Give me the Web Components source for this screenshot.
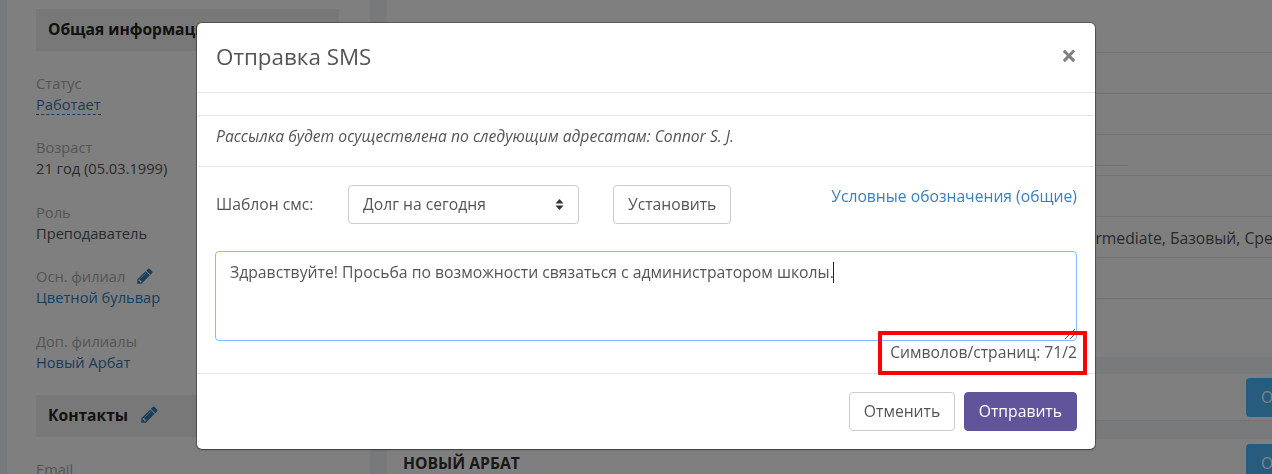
<!DOCTYPE html>
<html lang="ru"><head><meta charset="utf-8"><title>SMS</title>
<style>
html,body{margin:0;padding:0;height:474px;overflow:hidden;background:#eef2f5;font:14.67px/20px "Open Sans",sans-serif;color:#333}
</style></head><body>

<app-shell>
  <side-panel slot="side">
    <side-heading>Общая информация</side-heading>
    <info-field label="Статус"><a-dash>Работает</a-dash></info-field>
    <info-field label="Возраст">21 год (05.03.1999)</info-field>
    <info-field label="Роль">Преподаватель</info-field>
    <info-field label="Осн. филиал" edit link>Цветной бульвар</info-field>
    <info-field label="Доп. филиалы" link>Новый Арбат</info-field>
    <side-heading edit>Контакты</side-heading>
    <info-field label="Email"></info-field>
  </side-panel>
  <main-panel slot="main"></main-panel>
</app-shell>

<sms-modal></sms-modal>

<script>
const PENCIL = s => `<svg width="${s}" height="${s}" viewBox="0 0 1792 1792" style="display:block"><path fill="currentColor" d="M491 1536l91-91-235-235-91 91v107h128v128h107zm523-928q0-22-22-22-10 0-17 7l-542 542q-7 7-7 17 0 22 22 22 10 0 17-7l542-542q7-7 7-17zm-54-192l416 416-832 832h-416v-416zm683 96q0 53-37 90l-166 166-416-416 166-165q36-38 90-38 53 0 91 38l235 234q37 39 37 91z"/></svg>`;
function def(name, html, init){
  customElements.define(name, class extends HTMLElement{
    constructor(){super();this.attachShadow({mode:'open'}).innerHTML = html;}
    connectedCallback(){ if(init) init(this); }
  });
}
def('app-shell',`<style>
:host{display:flex;height:474px;overflow:hidden;padding-left:7px;box-sizing:border-box}
.side{width:363px;background:#fff;flex:none}
.gap{width:17px;flex:none}
.main{flex:1;background:#fff;min-width:0}
</style><div class="side"><slot name="side"></slot></div><div class="gap"></div><div class="main"><slot name="main"></slot></div>`);

def('side-panel',`<style>:host{display:block;padding:9px 31px 0 29px}</style><slot></slot>`);

def('side-heading',`<style>
:host{display:flex;align-items:center;gap:12px;height:42px;box-sizing:border-box;padding:0 0 2px 12px;background:#f0f0f0;font-weight:700;font-size:15.6px;color:#222;margin-bottom:22px;white-space:nowrap;overflow:hidden}
.i{color:#337ab7;display:block}
</style><slot></slot><span class="i"></span>`, el=>{ if(el.hasAttribute('edit')) el.shadowRoot.querySelector('.i').innerHTML=PENCIL(19); });

def('info-field',`<style>
:host{display:block;margin-bottom:23.4px;color:#555;white-space:nowrap}
.l{color:#aaa;display:flex;align-items:center;gap:11px;height:20px}
.i{color:#337ab7;display:block}
.v{margin-top:1px;height:20px}
:host([link]) .v{color:#337ab7}
</style><div class="l"><span class="t"></span><span class="i"></span></div><div class="v"><slot></slot></div>`, el=>{
  el.shadowRoot.querySelector('.t').textContent=el.getAttribute('label');
  if(el.hasAttribute('edit')) el.shadowRoot.querySelector('.i').innerHTML=PENCIL(18);
});

def('a-dash',`<style>:host{display:inline-block;color:#337ab7;border-bottom:1px dashed #337ab7;line-height:20px;padding-top:0;vertical-align:top}</style><slot></slot>`);

def('main-panel',`<style>
:host{display:block;overflow:hidden;white-space:nowrap;font-size:15.7px}
.r{height:40px;border-bottom:1px solid #e7e7e7;position:relative;box-sizing:content-box}
.r.first{height:52px}
.short{height:30px;border-bottom:1px solid #e7e7e7;width:741px}
.txt{padding-left:680px;line-height:42px;color:#555}
.blank{height:58px}
.band{height:17px;background:#f0f4f6}
.sec{height:46px;border-bottom:1px solid #e7e7e7;display:flex;justify-content:flex-end}
.band2{height:18px;background:#f0f4f6}
.b{width:60px;height:39px;background:#4fb9ff;border-radius:4px;margin:4px -34px 0 0;color:#fff;padding:9px 0 0 15px;box-sizing:border-box;flex:none;font-weight:400}
.sec2{padding-left:16px;font-weight:700;color:#333;display:flex;justify-content:space-between;height:40px}
.sec2 .b{margin-top:5px}
.name{padding-top:14px}
</style>
<div class="r first"></div><div class="r"></div><div class="r"></div><div class="r"><div class="short"></div></div><div class="r"></div>
<div class="r txt">Intermediate, Базовый, Средний</div><div class="r"></div>
<div class="blank"></div><div class="band"></div>
<div class="sec"><div class="b">О</div></div>
<div class="band2"></div>
<div class="sec2"><span class="name">НОВЫЙ АРБАТ</span><div class="b">О</div></div>`);

def('plain-btn',`<style>
:host{display:inline-flex;align-items:center;justify-content:center;height:39px;box-sizing:border-box;padding:0 14px 1px;border:1px solid #ccc;border-radius:4px;background:#fff;color:#555;font-size:15.7px;white-space:nowrap}
:host([primary]){background:#62549a;border-color:#62549a;color:#fff}
:host([tight]){padding-left:13.5px;padding-right:13.5px}
</style><slot></slot>`);

def('template-select',`<style>
:host{display:flex;align-items:center;justify-content:space-between;width:231px;height:39px;box-sizing:border-box;padding:0 14px 1px;border:1px solid #ccc;border-radius:4px;color:#555;font-size:15.7px;background:#fff}
svg{display:block}
</style><span><slot></slot></span><svg width="9" height="13" viewBox="0 0 9 13"><path fill="#333" d="M4.5 1 8.5 5.5H.5zM4.5 12 .5 7.5h8z"/></svg>`);

def('sms-text',`<style>
:host{display:block;position:relative;height:90px;box-sizing:border-box;border:1px solid #80bdff;border-radius:4px;padding:10px 14px;color:#555;font-size:15.75px;line-height:21px}
.c{display:inline-block;width:1px;height:21px;background:#222;vertical-align:top;margin-left:-1px}
svg{position:absolute;right:0;bottom:0}
</style><slot></slot><span class="c"></span><svg width="13" height="13" viewBox="0 0 13 13"><path stroke="#555" stroke-width="1" fill="none" d="M2 12 12 2M7 12l5-5"/></svg>`);

def('sms-modal',`<style>
:host{position:fixed;inset:0;display:block;background:rgba(0,0,0,.5);color:#555;font:15.7px/21px "Open Sans",sans-serif}
.m{position:relative;margin:23px 0 0 197px;width:898px;height:426px;background:#fff;border-radius:5px;box-shadow:0 0 0 1px rgba(0,0,0,.3),0 1px 2px rgba(0,0,0,.3);display:flex;flex-direction:column}
header{display:flex;align-items:center;justify-content:space-between;padding:0 19px 2px;box-sizing:content-box;height:67px;border-bottom:1px solid #e5e5e5;flex:none}
h2{margin:0;font-size:22.4px;font-weight:400;line-height:30px}
.x{font:700 28px/24px "Open Sans",sans-serif;color:#808080;margin:0 -1px 4px 0}
.empty{height:22px;flex:none;border-bottom:1px solid #e5e5e5;margin:0 1px}
.to{flex:none;border-bottom:1px solid #e5e5e5;margin:0 1px;padding:0 18px 9px;box-sizing:border-box;height:51px;display:flex;align-items:center;font-style:italic}
.f{flex:1;padding:18px 18px 0;display:flex;flex-direction:column;min-height:0}
.row{display:flex;align-items:center;height:39px;margin-bottom:27px}
.lb{width:133px;box-sizing:border-box;padding:0 0 1px 1px;flex:none;white-space:nowrap}
.row plain-btn{margin-left:34px}
.lnk{margin-left:auto;margin-top:1px;color:#3b7fbe;align-self:flex-start;white-space:nowrap}
.cnt{text-align:right;margin-top:1px;white-space:nowrap}
footer{height:76px;flex:none;border-top:1px solid #e5e5e5;box-sizing:border-box;padding:18px 18px 0;display:flex;justify-content:flex-end;gap:9px}
.mark{position:absolute;left:681px;top:308px;width:209px;height:44px;box-sizing:border-box;border:4px solid #f00;border-radius:1px;pointer-events:none}
</style>
<div class="m">
<header><h2>Отправка SMS</h2><span class="x">×</span></header>
<div class="empty"></div>
<div class="to">Рассылка будет осуществлена по следующим адресатам: Connor S. J.</div>
<div class="f">
 <div class="row"><span class="lb">Шаблон смс:</span><template-select>Долг на сегодня</template-select><plain-btn>Установить</plain-btn><span class="lnk">Условные обозначения (общие)</span></div>
 <sms-text>Здравствуйте! Просьба по возможности связаться с администратором школы.</sms-text>
 <div class="cnt">Символов/страниц: 71/2</div>
</div>
<footer><plain-btn tight>Отменить</plain-btn><plain-btn primary>Отправить</plain-btn></footer>
<div class="mark"></div>
</div>`);
</script>
</body></html>
